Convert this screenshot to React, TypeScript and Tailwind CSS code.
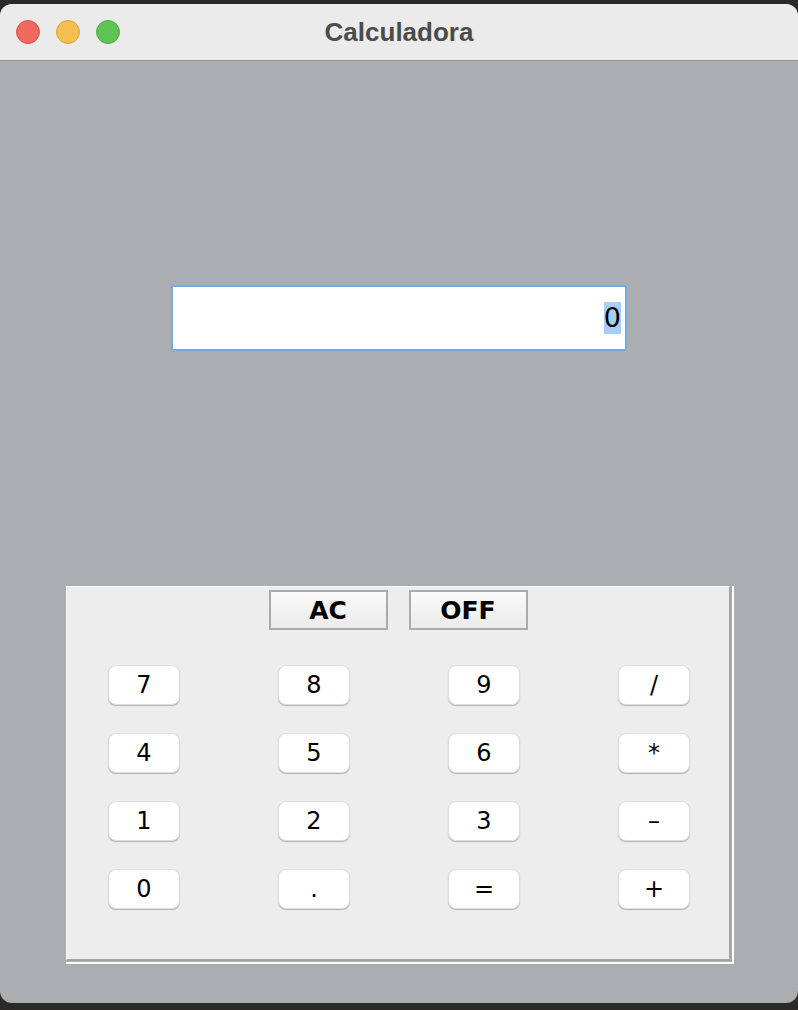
const KEYS = ["7", "8", "9", "/", "4", "5", "6", "*", "1", "2", "3", "–", "0", ".", "=", "+"];

function TrafficLights() {
  return (
    <div className="flex items-center gap-4 pl-4">
      <span className="h-6 w-6 rounded-full border border-[#d9544a] bg-[#ef6a5e]" />
      <span className="h-6 w-6 rounded-full border border-[#dba23e] bg-[#f5be4f]" />
      <span className="h-6 w-6 rounded-full border border-[#4fae43] bg-[#60c454]" />
    </div>
  );
}

function ControlButton({ label }: { label: string }) {
  return (
    <button className="flex h-10 w-[119px] items-center justify-center border-2 border-[#ababab] bg-gradient-to-b from-[#fafafa] to-[#ebebeb] font-['DejaVu_Sans',sans-serif] text-[25px] font-bold leading-none text-black">
      {label}
    </button>
  );
}

function KeyButton({ label }: { label: string }) {
  return (
    <button className="flex h-10 w-[72px] items-center justify-center rounded-[8px] border border-[#dedede] bg-white font-['DejaVu_Sans',sans-serif] text-[24px] leading-none text-black shadow-[0_1px_1px_rgba(0,0,0,0.25)]">
      {label}
    </button>
  );
}

export default function App() {
  return (
    <div className="flex h-[1010px] w-[798px] flex-col bg-[#2b2a29] pt-1 pb-[7px]">
      <div className="flex flex-1 flex-col overflow-hidden rounded-[12px] bg-[#abaeb1]">
        <div className="relative flex h-[57px] items-center border-b border-[#969696] bg-[#ecebeb]">
          <TrafficLights />
          <p className="absolute inset-x-0 text-center font-['Liberation_Sans',sans-serif] text-[26px] font-bold text-[#4b4b4b]">
            Calculadora
          </p>
        </div>

        <div className="flex flex-1 flex-col items-center">
          <div className="mt-[224px] flex h-[66px] w-[456px] items-center justify-end border-2 border-[#7aa8e2] bg-white pr-[4px]">
            <span className="bg-[#a9cdf9] py-1 font-['DejaVu_Sans',sans-serif] text-[27px] leading-[24px] text-black">
              0
            </span>
          </div>

          <div className="mt-[235px] ml-[66px] self-start border-r-2 border-b-2 border-white pr-px pb-px">
            <div className="flex h-[375px] w-[665px] flex-col border-t border-l border-[#f8f8f8] border-r-2 border-b-2 border-r-[#a4a4a4] border-b-[#a4a4a4] bg-[#ededed]">
              <div className="mt-[3px] flex justify-center gap-[21px]">
                <ControlButton label="AC" />
                <ControlButton label="OFF" />
              </div>
              <div className="mt-[35px] grid grid-cols-[repeat(4,72px)] gap-x-[98px] gap-y-7 pl-[41px]">
                {KEYS.map((key) => (
                  <KeyButton key={key} label={key} />
                ))}
              </div>
            </div>
          </div>
        </div>
      </div>
    </div>
  );
}
